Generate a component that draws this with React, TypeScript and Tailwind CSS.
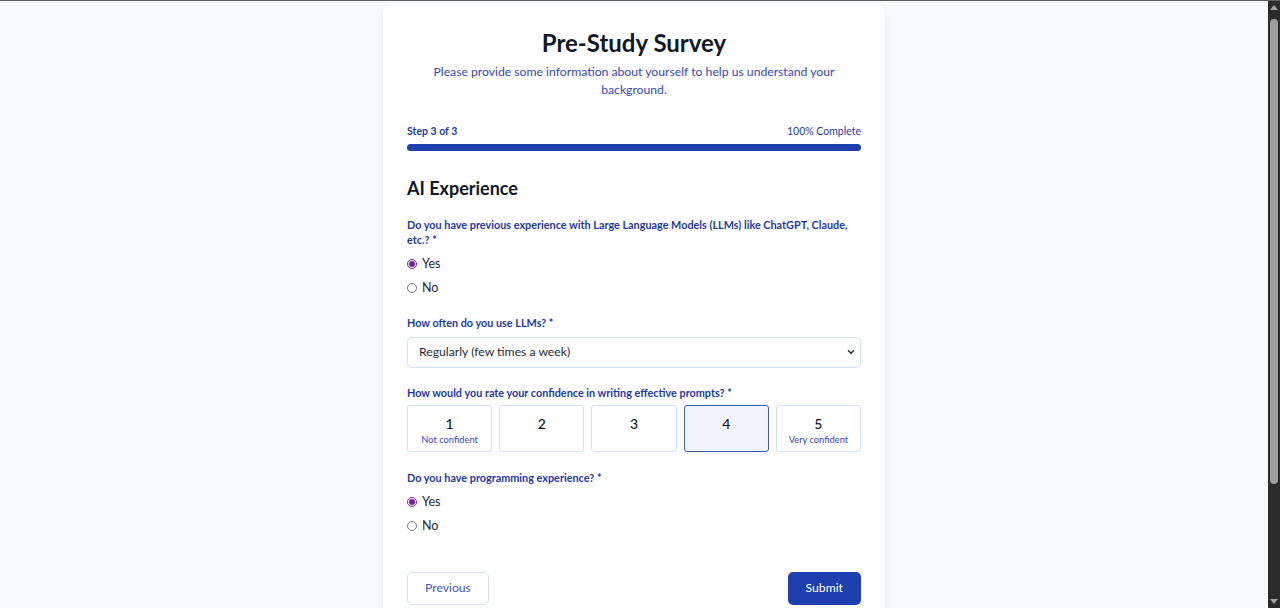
import { ChevronDown } from "lucide-react";

const ratings = [
  { value: 1, caption: "Not confident" },
  { value: 2, caption: "" },
  { value: 3, caption: "" },
  { value: 4, caption: "" },
  { value: 5, caption: "Very confident" },
];

function RadioGroup({ name, selected }: { name: string; selected: string }) {
  return (
    <div className="mt-[5px] flex flex-col">
      {["Yes", "No"].map((opt) => (
        <label key={opt} className="flex h-[24px] items-center gap-[5px] text-[12.5px] text-[#1f2937]">
          <input
            type="radio"
            name={name}
            defaultChecked={opt === selected}
            className="m-0 h-[10px] w-[10px] accent-[#7b1fa2]"
          />
          <span>{opt}</span>
        </label>
      ))}
    </div>
  );
}

function Label({ children }: { children: React.ReactNode }) {
  return (
    <div className="text-[10.85px] font-bold leading-[15px] text-[#1e3aa6]">{children}</div>
  );
}

function FakeScrollbar() {
  return (
    <div className="flex w-[12px] flex-col items-center bg-[#2b2b2b] py-[4px]">
      <div className="h-0 w-0 border-x-[4px] border-b-[5px] border-x-transparent border-b-[#a3a3a3]" />
      <div className="mt-[9px] h-[465px] w-[8px] rounded-full bg-[#9e9e9e]" />
      <div className="flex-1" />
      <div className="h-0 w-0 border-x-[4px] border-t-[5px] border-x-transparent border-t-[#a3a3a3]" />
    </div>
  );
}

export default function App() {
  return (
    <div
      className="flex h-[608px] w-full overflow-hidden border-t border-[#5f5f5f]"
      style={{ fontFamily: 'Lato, "Noto Sans", sans-serif' }}
    >
      <div className="flex-1 overflow-hidden bg-[#f8f9fb]">
        <div className="mx-auto mt-[4px] w-[502px] rounded-lg bg-white px-[24px] pb-[40px] pt-[24px] shadow-md">
          <div className="text-center">
            <h1 className="text-[24px] font-bold leading-[28px] text-[#111827]">Pre-Study Survey</h1>
            <p className="mt-[6px] text-[12.2px] leading-[18px] text-[#3347b8]">
              Please provide some information about yourself to help us understand your background.
            </p>
          </div>

          <div className="mt-[25px]">
            <div className="flex items-center justify-between text-[10.5px] leading-[15px] text-[#1e3aa6]">
              <span className="font-bold">Step 3 of 3</span>
              <span>100% Complete</span>
            </div>
            <div className="mt-[5px] h-[7px] w-full rounded-full bg-[#1e40af]" />
          </div>

          <h2 className="mt-[25px] text-[18px] font-bold leading-[25px] text-[#111827]">AI Experience</h2>

          <div className="mt-[16px]">
            <Label>Do you have previous experience with Large Language Models (LLMs) like ChatGPT, Claude, etc.? *</Label>
            <RadioGroup name="llm" selected="Yes" />
          </div>

          <div className="mt-[15px]">
            <Label>How often do you use LLMs? *</Label>
            <div className="relative mt-[7px]">
              <select
                defaultValue="regular"
                className="h-[31px] w-full appearance-none rounded-[5px] border border-[#cfe0fb] bg-white px-[11px] text-[12.2px] text-[#1f2937] outline-none"
              >
                <option value="daily">Daily</option>
                <option value="regular">Regularly (few times a week)</option>
                <option value="rare">Rarely</option>
              </select>
              <ChevronDown className="pointer-events-none absolute right-[5px] top-[10px] h-[10px] w-[10px] text-[#1f2937]" strokeWidth={3.5} />
            </div>
          </div>

          <div className="mt-[17px]">
            <Label>How would you rate your confidence in writing effective prompts? *</Label>
            <div className="mt-[5px] grid grid-cols-5 gap-[7px]">
              {ratings.map((r) => (
                <div
                  key={r.value}
                  className={`flex h-[47px] flex-col items-center rounded-[3px] border pt-[9px] ${
                    r.value === 4 ? "border-[#3f5cc0] bg-[#f1f5fb]" : "border-[#cfe0fb] bg-white"
                  }`}
                >
                  <span className="text-[14px] font-medium leading-[18px] text-[#111827]">{r.value}</span>
                  {r.caption && (
                    <span className="mt-[1px] text-[9.3px] leading-[12px] text-[#3347b8]">{r.caption}</span>
                  )}
                </div>
              ))}
            </div>
          </div>

          <div className="mt-[18px]">
            <Label>Do you have programming experience? *</Label>
            <RadioGroup name="prog" selected="Yes" />
          </div>

          <div className="mt-[34px] flex items-center justify-between">
            <button className="h-[33px] rounded-[5px] border border-[#cfe0fb] bg-white px-[17px] text-[12.2px] text-[#4457c0]">
              Previous
            </button>
            <button className="h-[33px] rounded-[5px] bg-[#1e40af] px-[18px] text-[12.2px] text-white">
              Submit
            </button>
          </div>
        </div>
      </div>
      <FakeScrollbar />
    </div>
  );
}
